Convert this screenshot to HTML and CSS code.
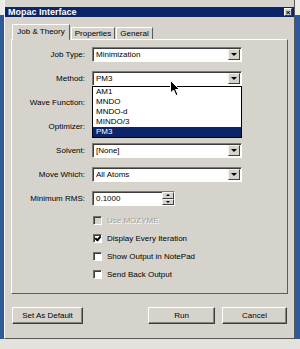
FILE: index.html
```html
<!DOCTYPE html>
<html>
  <head>
    <meta charset="utf-8">
    <title>Mopac Interface</title>
    <link rel="stylesheet" href="styles.css">
  </head>
  <body>
    <div class="screen">
      <div class="desk">
        <div class="window">
          <div class="titlebar">
            <span class="title">Mopac Interface</span>
            <span class="close">&times;</span>
          </div>
          <div class="body">
            <div class="tabs">
              <div class="tab active">Job &amp; Theory</div>
              <div class="tab">Properties</div>
              <div class="tab">General</div>
            </div>
            <div class="panel">
              <div class="form">
                <label>Job Type:</label>
                <div class="combo"><span class="val">Minimization</span><span class="arrow"></span></div>

                <label>Method:</label>
                <div class="combo open">
                  <span class="val">PM3</span><span class="arrow"></span>
                  <ul class="droplist">
                    <li>AM1</li>
                    <li>MNDO</li>
                    <li>MNDO-d</li>
                    <li>MINDO/3</li>
                    <li class="sel">PM3</li>
                  </ul>
                  <svg class="cursor" width="11" height="17" viewBox="0 0 11 17">
                    <path d="M0.5 0.5 L0.5 13 L3.5 10 L6 15.5 L8 14.6 L5.6 9.5 L9.6 9.5 Z" fill="#000" stroke="#fff" stroke-width="1"/>
                  </svg>
                </div>

                <label>Wave Function:</label>
                <div class="combo"><span class="val"></span><span class="arrow"></span></div>

                <label>Optimizer:</label>
                <div class="combo"><span class="val"></span><span class="arrow"></span></div>

                <label>Solvent:</label>
                <div class="combo"><span class="val">[None]</span><span class="arrow"></span></div>

                <label>Move Which:</label>
                <div class="combo"><span class="val">All Atoms</span><span class="arrow"></span></div>

                <label>Minimum RMS:</label>
                <div class="spin"><span class="val">0.1000</span><span class="spinbtns"><span class="up"></span><span class="down"></span></span></div>
              </div>

              <div class="checks">
                <div class="check disabled"><span class="box"></span>Use MOZYME</div>
                <div class="check"><span class="box checked"></span>Display Every Iteration</div>
                <div class="check"><span class="box"></span>Show Output in NotePad</div>
                <div class="check"><span class="box"></span>Send Back Output</div>
              </div>
            </div>

            <div class="buttons">
              <div class="btn default">Set As Default</div>
              <div class="spacer"></div>
              <div class="btn run">Run</div>
              <div class="btn cancel">Cancel</div>
            </div>
          </div>
        </div>
      </div>
    </div>
  </body>
</html>
```

FILE: styles.css
```css
*{margin: 0;padding: 0;box-sizing: border-box;}
ul {list-style: none;}
body {
  background: #e4e2dc;
  font-family: "Liberation Sans", Arial, sans-serif;
  font-size: 8px;
  color: #000;
}

.screen {width: 300px;height: 349px;overflow: hidden;background: #e4e2dc;}
.desk {
  height: 339px;
  display: flex;
  padding-left: 4px;
  background: linear-gradient(#ecebe5 0 15px, #2d5a9a 15px);
}

.window {
  width: 291px;
  height: 339px;
  background: #d6d3cc;
  border-left: 1px solid #f4f3ef;
  border-right: 1px solid #5a5955;
  border-bottom: 1px solid #5a5955;
  padding-top: 7px;
  display: flex;
  flex-direction: column;
}

.titlebar {
  height: 10px;
  background: #0b2568;
  color: #fff;
  display: flex;
  align-items: center;
  justify-content: space-between;
  padding: 0 2px 0 3px;
}
.title {font-weight: bold;font-size: 9px;line-height: 10px;}
.close {
  width: 8px;
  height: 8px;
  background: #d6d3cc;
  color: #000;
  font-size: 8px;
  line-height: 7px;
  text-align: center;
  font-weight: bold;
  border: 1px solid;
  border-color: #fff #404040 #404040 #fff;
}

.body {padding: 7px 6px 0 6px;display: flex;flex-direction: column;}

.tabs {display: flex;align-items: flex-end;height: 15px;padding-left: 1px;}
.tab {
  height: 12px;
  line-height: 11px;
  text-align: center;
  border: 1px solid;
  border-color: #fff #5d5c58 transparent #fff;
  border-bottom: none;
  margin-right: 1px;
}
.tab.active {width: 58px;height: 16px;line-height: 14px;margin-bottom: -1px;background: #d6d3cc;position: relative;z-index: 1;}
.tab:nth-child(2) {width: 44px;}
.tab:nth-child(3) {width: 37px;}

.panel {
  height: 255px;
  border: 1px solid;
  border-color: #fff #5d5c58 #5d5c58 #fff;
  padding-top: 7px;
}

.form {
  display: grid;
  grid-template-columns: 73px 150px;
  column-gap: 7px;
  row-gap: 9px;
  grid-auto-rows: 15px;
}
.form label {text-align: right;line-height: 15px;}

.combo, .spin {
  position: relative;
  background: #fff;
  border: 1px solid;
  border-color: #7b7a76 #fff #fff #7b7a76;
  box-shadow: inset 1px 1px 0 #3c3c3c;
  display: flex;
  align-items: center;
}
.val {flex: 1;padding-left: 3px;line-height: 13px;}
.arrow {
  width: 12px;
  height: 11px;
  margin-right: 1px;
  background: #d6d3cc;
  border: 1px solid;
  border-color: #f4f3ef #404040 #404040 #f4f3ef;
  display: flex;
  align-items: center;
  justify-content: center;
}
.arrow::after {
  content: "";
  border-left: 3px solid transparent;
  border-right: 3px solid transparent;
  border-top: 3px solid #000;
}

.droplist {
  position: absolute;
  left: -1px;
  right: -1px;
  top: 14px;
  background: #fff;
  border: 1px solid #000;
  z-index: 5;
}
.droplist li {height: 10px;line-height: 10px;padding-left: 3px;}
.droplist li.sel {background: #0b2568;color: #fff;}

.cursor {position: absolute;left: 77px;top: 8px;z-index: 6;}

.spin {width: 83px;}
.spinbtns {display: flex;flex-direction: column;width: 12px;height: 13px;}
.spinbtns span {
  flex: 1;
  background: #d6d3cc;
  border: 1px solid;
  border-color: #f4f3ef #404040 #404040 #f4f3ef;
  display: flex;
  align-items: center;
  justify-content: center;
}
.spinbtns .up::after {content: "";border-left: 2px solid transparent;border-right: 2px solid transparent;border-bottom: 2px solid #000;}
.spinbtns .down::after {content: "";border-left: 2px solid transparent;border-right: 2px solid transparent;border-top: 2px solid #000;}

.checks {padding: 5px 0 0 81px;}
.check {height: 18px;display: flex;align-items: center;gap: 5px;}
.box {
  width: 9px;
  height: 9px;
  background: #fff;
  border: 1px solid;
  border-color: #6e6d69 #fff #fff #6e6d69;
  box-shadow: inset 1px 1px 0 #3c3c3c;
  position: relative;
}
.box.checked::after {
  content: "";
  position: absolute;
  left: 2px;
  top: 0px;
  width: 2px;
  height: 4px;
  border: solid #000;
  border-width: 0 2px 2px 0;
  transform: rotate(40deg);
}
.check.disabled {color: #a19f9a;text-shadow: 1px 1px 0 #fff;}
.check.disabled .box {background: #d6d3cc;}

.buttons {display: flex;margin-top: 13px;padding: 0 1px;}
.spacer {flex: 1;}
.btn {
  height: 17px;
  line-height: 15px;
  text-align: center;
  background: #d6d3cc;
  border: 1px solid;
  border-color: #fff #3c3c3c #3c3c3c #fff;
  box-shadow: inset -1px -1px 0 #85837e;
}
.btn.default {width: 71px;}
.btn.run {width: 67px;margin-right: 7px;}
.btn.cancel {width: 65px;}
```
